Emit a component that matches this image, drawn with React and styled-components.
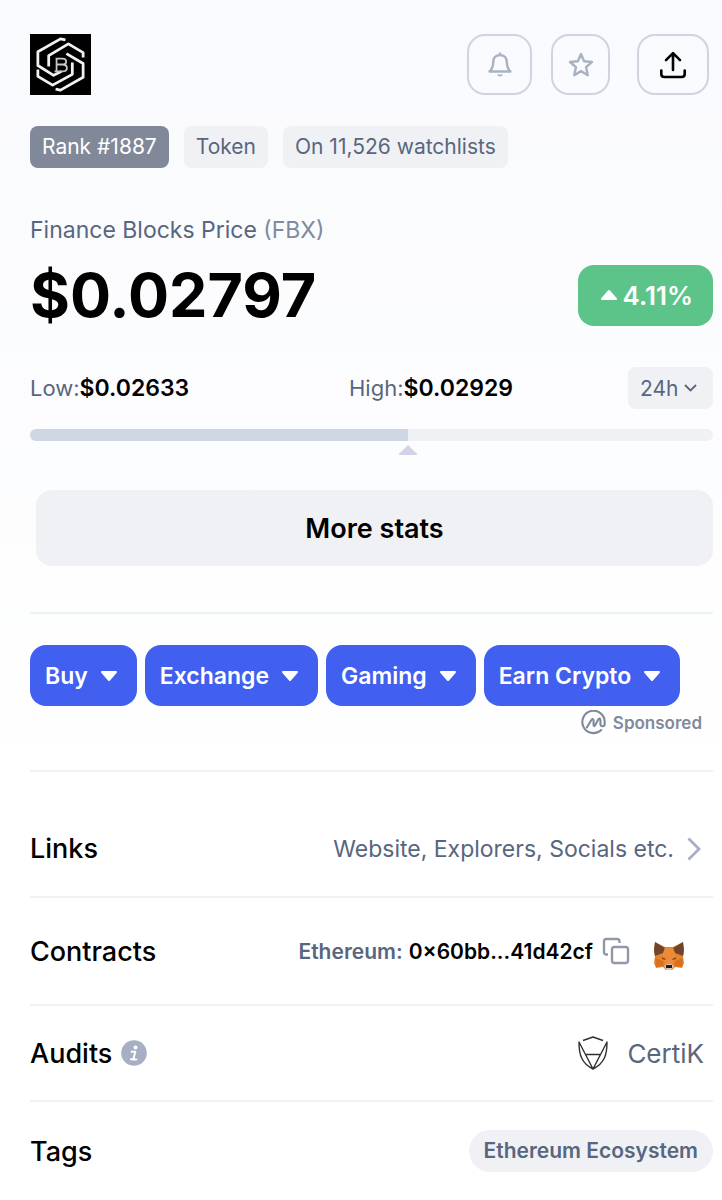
import styled, { createGlobalStyle } from "styled-components";

const GlobalStyle = createGlobalStyle`
  * {
    box-sizing: border-box;
  }

  body {
    margin: 0;
    background: #ffffff;
    font-family: Inter, "Liberation Sans", sans-serif;
    color: #000000;
  }

  button, select {
    font: inherit;
    color: inherit;
    cursor: pointer;
  }
`;

const Page = styled.main`
  padding: 34px 9px 24px 30px;
  background: linear-gradient(#f9fafd, #ffffff 780px);
`;

const Header = styled.header`
  display: flex;
  align-items: center;
`;

const Logo = styled.svg`
  width: 61px;
  height: 61px;
  margin-right: auto;
`;

const HeaderActions = styled.div`
  display: flex;
  gap: 19px;
  margin-right: 4px;

  & > :last-child {
    margin-left: 8px;
  }
`;

const IconButton = styled.button`
  display: flex;
  align-items: center;
  justify-content: center;
  width: ${(props) => props.$width}px;
  height: 61px;
  padding: 0;
  border: 2px solid #d0d4e1;
  border-radius: 18px;
  background: transparent;
  color: ${(props) => props.$color || "#a8b2c0"};
`;

const Badges = styled.div`
  display: flex;
  gap: 15px;
  margin-top: 31px;
`;

const Badge = styled.span`
  padding: 0 12px;
  border-radius: 8px;
  background: ${(props) => (props.$dark ? "#81889a" : "#f0f1f5")};
  color: ${(props) => (props.$dark ? "#ffffff" : "#58667e")};
  font-size: 21px;
  line-height: 42px;
`;

const CoinName = styled.h1`
  margin: 47px 0 0;
  color: #58667e;
  font-size: 23px;
  font-weight: 400;
  line-height: 30px;

  small {
    color: #808a9d;
    font-size: inherit;
  }
`;

const PriceRow = styled.div`
  display: flex;
  align-items: center;
  justify-content: space-between;
  margin-top: 15px;
`;

const Price = styled.span`
  font-size: 61px;
  font-weight: 700;
  line-height: 70px;
`;

const Change = styled.span`
  display: flex;
  align-items: center;
  gap: 5px;
  height: 61px;
  padding: 0 20px 0 23px;
  border-radius: 16px;
  background: #5cc489;
  color: #ffffff;
  font-size: 26px;
  font-weight: 600;
`;

const RangeRow = styled.div`
  display: grid;
  grid-template-columns: 319fr 279fr 85fr;
  align-items: center;
  margin-top: 37px;
`;

const RangeLabel = styled.span`
  color: #58667e;
  font-size: 22px;

  b {
    color: #000000;
    font-size: 23px;
    font-weight: 600;
  }
`;

const PeriodPicker = styled.label`
  display: grid;
  align-items: center;
  color: #58667e;

  select {
    grid-area: 1 / 1;
    height: 42px;
    padding: 0 12px;
    border: 0;
    border-radius: 8px;
    appearance: none;
    background: #f0f1f5;
    font-size: 21px;
  }

  svg {
    grid-area: 1 / 1;
    justify-self: end;
    margin-right: 16px;
    pointer-events: none;
  }
`;

const Track = styled.div`
  height: 12px;
  margin-top: 20px;
  border-radius: 6px;
  background: #f0f1f5;
  overflow: hidden;
`;

const Fill = styled.div`
  height: 100%;
  background: #cfd6e4;
`;

const Pointer = styled.div`
  display: flex;
  height: 14px;
  padding-top: 4px;

  svg {
    margin-left: -9px;
  }
`;

const StatsButton = styled.button`
  display: block;
  width: calc(100% - 6px);
  height: 76px;
  margin: 35px 0 46px 6px;
  border: 0;
  border-radius: 16px;
  background: #f0f1f5;
  font-size: 27px;
  font-weight: 600;
`;

const Sponsors = styled.section`
  height: 158px;
  padding-top: 31px;
  border-top: 2px solid #eef1f6;
`;

const SponsorButtons = styled.div`
  display: flex;
  gap: 8px;
`;

const SponsorButton = styled.button`
  display: flex;
  align-items: center;
  gap: 13px;
  height: 61px;
  padding: 0 20px 0 15px;
  border: 0;
  border-radius: 16px;
  background: #4260f0;
  color: #ffffff;
  font-size: 23px;
  font-weight: 600;
  white-space: nowrap;
`;

const SponsoredNote = styled.div`
  display: flex;
  align-items: center;
  justify-content: flex-end;
  gap: 7px;
  margin: 4px 11px 0 0;
  color: #808a9d;
  font-size: 17px;
  font-weight: 600;
`;

const Row = styled.section`
  display: flex;
  align-items: center;
  justify-content: space-between;
  height: ${(props) => props.$height}px;
  padding: ${(props) => props.$padding || "0"};
  border-top: 2px solid #eef1f6;
`;

const RowTitle = styled.h2`
  display: flex;
  align-items: center;
  gap: 9px;
  margin: 0;
  font-size: 27px;
  font-weight: 500;
`;

const LinksAnchor = styled.a`
  display: flex;
  align-items: center;
  gap: 13px;
  margin-right: 12px;
  color: #58667e;
  font-size: 23px;
  text-decoration: none;
`;

const Contract = styled.div`
  display: flex;
  align-items: center;
  margin-right: 28px;
  color: #58667e;
  font-size: 21px;
  font-weight: 600;

  a {
    margin-left: 6px;
    color: #000000;
    text-decoration: none;
  }
`;

const PlainButton = styled.button`
  display: flex;
  margin-left: ${(props) => props.$gap}px;
  padding: 0;
  border: 0;
  background: none;
  color: #9298aa;
`;

const Auditor = styled.a`
  display: flex;
  align-items: center;
  gap: 19px;
  margin-right: 9px;
  color: #58667e;
  font-size: 26px;
  text-decoration: none;
`;

const Tag = styled.a`
  padding: 0 15px;
  border-radius: 21px;
  background: #f0f1f5;
  color: #58667e;
  font-size: 21px;
  font-weight: 600;
  line-height: 42px;
  text-decoration: none;
`;

function Caret({ up }) {
  return (
    <svg width="16" height="10" viewBox="0 0 16 10" aria-hidden="true">
      <path
        d={up ? "M1 9 8 1l7 8z" : "M1 1h14L8 9z"}
        fill="currentColor"
        stroke="currentColor"
        strokeWidth="2"
        strokeLinejoin="round"
      />
    </svg>
  );
}

function BlocksLogo() {
  return (
    <Logo viewBox="0 0 62 62" role="img" aria-label="Finance Blocks">
      <path fill="#000" d="M0 0h62v62H0z" />
      <g fill="none" stroke="#f2f2f2" strokeWidth="2.8" strokeLinejoin="round">
        <path d="M36 6 31 5 8 18v14l16 10 8-4" />
        <path d="M26 56l5 1 23-13V30L37 20" />
        <path d="M19 33V22l20-12 15 9v5" />
        <path d="M43 29v12L23 52 8 43v-7" />
      </g>
      <path
        d="M26 25h7c5 0 5 6 0 6h-6m6 0c6 0 6 7 0 7h-8M27 25v13"
        fill="none"
        stroke="#c8c8c8"
        strokeWidth="1.8"
      />
    </Logo>
  );
}

function BellIcon() {
  return (
    <svg width="26" height="28" viewBox="0 0 26 28" fill="none" stroke="currentColor" strokeWidth="2.4" strokeLinejoin="round" aria-hidden="true">
      <path d="M13 4c-4.500 0-6.800 3.200-6.800 7.200 0 4.800-1.400 7.100-3.700 9.300h21c-2.300-2.200-3.700-4.500-3.700-9.300C19.800 7.200 17.500 4 13 4ZM13 1.500V4" />
      <path d="M10 23.500h6a3.200 3.200 0 0 1-6 0Z" fill="currentColor" stroke="none" />
    </svg>
  );
}

function StarIcon() {
  return (
    <svg width="26" height="28" viewBox="0 0 26 28" fill="none" stroke="currentColor" strokeWidth="2.4" strokeLinejoin="round" aria-hidden="true">
      <path d="m13 3 3.100 7.200 7.900.8-5.900 5.200 1.700 8-6.800-4.100-6.800 4.100 1.700-8L2 11l7.900-.8L13 3Z" />
    </svg>
  );
}

function ShareIcon() {
  return (
    <svg width="28" height="28" viewBox="0 0 28 28" fill="none" stroke="currentColor" strokeWidth="2.6" strokeLinecap="round" strokeLinejoin="round" aria-hidden="true">
      <path d="M14 19V2.500M7 9.200l7-7 7 7M2.300 19.500v3.500q0 3 3 3h17.400q3 0 3-3v-3.500" />
    </svg>
  );
}

function SponsorMark() {
  return (
    <svg width="25" height="25" viewBox="0 0 26 26" fill="none" stroke="currentColor" strokeWidth="2.2" strokeLinecap="round" strokeLinejoin="round" aria-hidden="true">
      <path d="M21 20.800A11.600 11.600 0 1 1 24.600 13v1.500c0 3-4.400 3.300-4.400 0v-3.800c0-2.200-1.500-2.300-2.400-.6l-3.300 6c-.6 1-1.400.8-1.400-.4v-4.400c0-2.300-1.500-2.500-2.500-.7L6.200 18" />
    </svg>
  );
}

function InfoIcon() {
  return (
    <svg width="26" height="26" viewBox="0 0 26 26" aria-hidden="true">
      <circle cx="13" cy="13" r="12.8" fill="#a6afc3" />
      <circle cx="14.5" cy="7.5" r="2" fill="#fff" />
      <path d="M10.500 11.700h3.800l-2 7.800h3M10 19.300l2.500-.3" fill="none" stroke="#fff" strokeWidth="2" strokeLinecap="round" strokeLinejoin="round" />
    </svg>
  );
}

function CopyIcon() {
  return (
    <svg width="28" height="28" viewBox="0 0 28 28" fill="none" stroke="currentColor" strokeWidth="2.4" strokeLinejoin="round" aria-hidden="true">
      <rect x="10" y="10" width="16" height="16" rx="2.5" />
      <path d="M6 17.500H4.500Q2 17.500 2 15V4.500Q2 2 4.500 2H15q2.500 0 2.500 2.500V6" />
    </svg>
  );
}

function FoxIcon() {
  return (
    <svg width="32" height="40" viewBox="0 -10 32 40" aria-hidden="true">
      <path fill="#e8832d" d="M2 1l10 5h8l10-5 1 9-1 6 1 6-2 5-7-1-3 3h-6l-3-3-7 1-2-5 1-6-1-6z" />
      <path fill="#70462a" d="M2 1l10 6-2 5-8 3-1-6zM30 1L20 7l2 5 8 3 1-6z" />
      <path fill="#ee8a35" d="M12 7h8l3 9-4 8h-6l-4-8z" />
      <path fill="#d9701f" d="M2 17l8 3 1 5-8 1zM30 17l-8 3-1 5 8 1z" />
      <path fill="#8a4c25" d="M9 16l4 2-1 1-3-1zM23 16l-4 2 1 1 3-1z" />
      <path fill="#d3c8be" d="M11 25l3-2h4l3 2-3 4h-4z" />
      <path fill="#241c18" d="M13 24h6v3h-6z" />
    </svg>
  );
}

function ShieldIcon() {
  return (
    <svg width="30" height="34" viewBox="0 0 30 34" fill="none" stroke="#303030" strokeWidth="1.4" strokeLinejoin="round" aria-hidden="true">
      <path d="M5 4.500 15 1l10 3.500M1 6c0 12 2 21 14 27C27 27 29 18 29 6L15 33 1 6ZM8 18.500h14" />
    </svg>
  );
}

const low = 0.02633;
const high = 0.02929;
const price = 0.02797;
const progress = ((price - low) / (high - low)) * 100;

export default function App() {
  return (
    <>
      <GlobalStyle />
      <Page>
        <Header>
          <BlocksLogo />
          <HeaderActions>
            <IconButton $width={65} aria-label="Price alerts">
              <BellIcon />
            </IconButton>
            <IconButton $width={59} aria-label="Add to watchlist">
              <StarIcon />
            </IconButton>
            <IconButton $width={72} $color="#000000" aria-label="Share">
              <ShareIcon />
            </IconButton>
          </HeaderActions>
        </Header>

        <Badges>
          <Badge $dark>Rank #1887</Badge>
          <Badge>Token</Badge>
          <Badge>On 11,526 watchlists</Badge>
        </Badges>

        <CoinName>
          Finance Blocks Price <small>(FBX)</small>
        </CoinName>
        <PriceRow>
          <Price>${price}</Price>
          <Change>
            <Caret up />
            4.11%
          </Change>
        </PriceRow>

        <RangeRow>
          <RangeLabel>
            Low:<b>${low}</b>
          </RangeLabel>
          <RangeLabel>
            High:<b>${high}</b>
          </RangeLabel>
          <PeriodPicker>
            <select aria-label="Period" defaultValue="24h">
              <option>24h</option>
              <option>7d</option>
            </select>
            <svg width="13" height="8" viewBox="0 0 13 8" fill="none" stroke="currentColor" strokeWidth="1.8">
              <path d="m1 1 5.500 5.500L12 1" />
            </svg>
          </PeriodPicker>
        </RangeRow>
        <Track>
          <Fill style={{ width: `${progress}%` }} />
        </Track>
        <Pointer style={{ paddingLeft: `${progress}%` }}>
          <svg width="18" height="10" viewBox="0 0 18 10" aria-hidden="true">
            <path d="M9 0l9 9v1H0V9z" fill="#cfd3e4" />
          </svg>
        </Pointer>

        <StatsButton>More stats</StatsButton>

        <Sponsors>
          <SponsorButtons>
            {["Buy", "Exchange", "Gaming", "Earn Crypto"].map((name) => (
              <SponsorButton key={name}>
                {name}
                <Caret />
              </SponsorButton>
            ))}
          </SponsorButtons>
          <SponsoredNote>
            <SponsorMark />
            Sponsored
          </SponsoredNote>
        </Sponsors>

        <Row $height={126} $padding="29px 0 0">
          <RowTitle>Links</RowTitle>
          <LinksAnchor href="#links">
            Website, Explorers, Socials etc.
            <svg width="14" height="24" viewBox="0 0 14 24" fill="none" stroke="#a6afc3" strokeWidth="2.8" aria-hidden="true">
              <path d="m1.500 1.500 10.500 10.500L1.500 22.500" />
            </svg>
          </LinksAnchor>
        </Row>

        <Row $height={108}>
          <RowTitle>Contracts</RowTitle>
          <Contract>
            Ethereum: <a href="#contract">0×60bb...41d42cf</a>
            <PlainButton $gap={9} aria-label="Copy address">
              <CopyIcon />
            </PlainButton>
            <PlainButton $gap={23} aria-label="Add to MetaMask">
              <FoxIcon />
            </PlainButton>
          </Contract>
        </Row>

        <Row $height={96}>
          <RowTitle>
            Audits
            <InfoIcon />
          </RowTitle>
          <Auditor href="#certik">
            <ShieldIcon />
            CertiK
          </Auditor>
        </Row>

        <Row $height={100}>
          <RowTitle>Tags</RowTitle>
          <Tag href="#ethereum">Ethereum Ecosystem</Tag>
        </Row>
      </Page>
    </>
  );
}
